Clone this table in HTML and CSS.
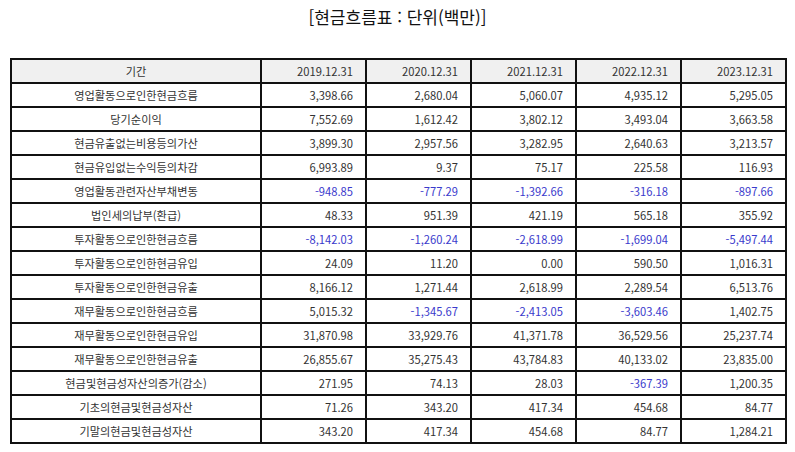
FILE: index.html
```html
<!DOCTYPE html>
<html lang="ko">
<head>
<meta charset="utf-8">
<link rel="stylesheet" href="styles.css">
</head>
<body>
<div class="page">
  <h1 class="title">[현금흐름표 : 단위(백만)]</h1>
  <table class="cf">
    <colgroup>
      <col class="c-label"><col class="c-num"><col class="c-num"><col class="c-num"><col class="c-num"><col class="c-num">
    </colgroup>
    <thead>
      <tr><th class="lbl">기간</th><th>2019.12.31</th><th>2020.12.31</th><th>2021.12.31</th><th>2022.12.31</th><th>2023.12.31</th></tr>
    </thead>
    <tbody>
      <tr><td class="lbl">영업활동으로인한현금흐름</td><td>3,398.66</td><td>2,680.04</td><td>5,060.07</td><td>4,935.12</td><td>5,295.05</td></tr>
      <tr><td class="lbl">당기순이익</td><td>7,552.69</td><td>1,612.42</td><td>3,802.12</td><td>3,493.04</td><td>3,663.58</td></tr>
      <tr><td class="lbl">현금유출없는비용등의가산</td><td>3,899.30</td><td>2,957.56</td><td>3,282.95</td><td>2,640.63</td><td>3,213.57</td></tr>
      <tr><td class="lbl">현금유입없는수익등의차감</td><td>6,993.89</td><td>9.37</td><td>75.17</td><td>225.58</td><td>116.93</td></tr>
      <tr><td class="lbl">영업활동관련자산부채변동</td><td class="neg">-948.85</td><td class="neg">-777.29</td><td class="neg">-1,392.66</td><td class="neg">-316.18</td><td class="neg">-897.66</td></tr>
      <tr><td class="lbl">법인세의납부(환급)</td><td>48.33</td><td>951.39</td><td>421.19</td><td>565.18</td><td>355.92</td></tr>
      <tr><td class="lbl">투자활동으로인한현금흐름</td><td class="neg">-8,142.03</td><td class="neg">-1,260.24</td><td class="neg">-2,618.99</td><td class="neg">-1,699.04</td><td class="neg">-5,497.44</td></tr>
      <tr><td class="lbl">투자활동으로인한현금유입</td><td>24.09</td><td>11.20</td><td>0.00</td><td>590.50</td><td>1,016.31</td></tr>
      <tr><td class="lbl">투자활동으로인한현금유출</td><td>8,166.12</td><td>1,271.44</td><td>2,618.99</td><td>2,289.54</td><td>6,513.76</td></tr>
      <tr><td class="lbl">재무활동으로인한현금흐름</td><td>5,015.32</td><td class="neg">-1,345.67</td><td class="neg">-2,413.05</td><td class="neg">-3,603.46</td><td>1,402.75</td></tr>
      <tr><td class="lbl">재무활동으로인한현금유입</td><td>31,870.98</td><td>33,929.76</td><td>41,371.78</td><td>36,529.56</td><td>25,237.74</td></tr>
      <tr><td class="lbl">재무활동으로인한현금유출</td><td>26,855.67</td><td>35,275.43</td><td>43,784.83</td><td>40,133.02</td><td>23,835.00</td></tr>
      <tr><td class="lbl">현금및현금성자산의증가(감소)</td><td>271.95</td><td>74.13</td><td>28.03</td><td class="neg">-367.39</td><td>1,200.35</td></tr>
      <tr><td class="lbl">기초의현금및현금성자산</td><td>71.26</td><td>343.20</td><td>417.34</td><td>454.68</td><td>84.77</td></tr>
      <tr><td class="lbl">기말의현금및현금성자산</td><td>343.20</td><td>417.34</td><td>454.68</td><td>84.77</td><td>1,284.21</td></tr>
    </tbody>
  </table>
</div>
</body>
</html>
```

FILE: styles.css
```css
html, body {
  margin: 0;
  padding: 0;
  background: #ffffff;
}

.page {
  padding: 0 10px;
  font-family: "Noto Sans CJK KR", "Noto Sans", sans-serif;
  color: #222;
}

.title {
  margin: 0;
  height: 58px;
  padding-top: 4px;
  box-sizing: border-box;
  text-align: center;
  font-size: 17px;
  font-weight: normal;
  line-height: 26px;
  color: #111;
}

.cf {
  width: 775px;
  border-collapse: collapse;
  table-layout: fixed;
  font-size: 11.2px;
}

.c-label { width: 250px; }
.c-num { width: 105px; }

.cf th,
.cf td {
  border: 2px solid #111;
  height: 24px;
  padding: 0 12px 0 6px;
  box-sizing: border-box;
  text-align: right;
  font-weight: normal;
  line-height: 20px;
  color: #333;
  white-space: nowrap;
}

.cf th {
  background: #f0f0f0;
}

.cf .lbl {
  text-align: center;
  padding: 0 6px;
  font-size: 11.2px;
}

.cf .neg {
  color: #3a3acc;
}
```
